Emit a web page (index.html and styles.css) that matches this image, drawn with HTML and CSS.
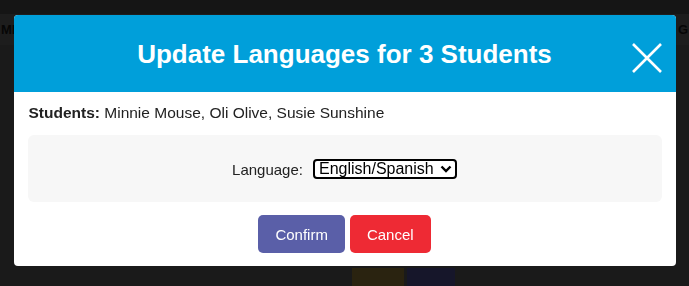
FILE: index.html
```html
<!DOCTYPE html>
<html lang="en">
<head>
    <meta charset="UTF-8">
    <meta name="viewport" content="width=device-width, initial-scale=1.0">
    <title>Update Languages</title>
    <link rel="stylesheet" href="styles.css">
</head>
<body>
    <div class="page">
        <div class="page-top"></div>
        <nav class="page-nav">
            <span>MI</span>
            <span>G</span>
        </nav>
        <div class="page-content">
            <div class="tile tile-orange"></div>
            <div class="tile tile-navy"></div>
        </div>
    </div>

    <div class="modal-overlay">
        <div class="modal">
            <header class="modal-header">
                <h1>Update Languages for 3 Students</h1>
                <button class="modal-close" aria-label="Close">
                    <svg width="30" height="30" viewBox="0 0 30 30">
                        <path d="M1 1 L29 29 M29 1 L1 29" stroke="#fff" stroke-width="2.6" fill="none"/>
                    </svg>
                </button>
            </header>

            <div class="modal-body">
                <p class="students"><strong>Students:</strong> Minnie Mouse, Oli Olive, Susie Sunshine</p>

                <div class="field-panel">
                    <label for="language">Language:</label>
                    <span class="select-wrap">
                        <select id="language">
                            <option>English/Spanish</option>
                            <option>English</option>
                            <option>Spanish</option>
                        </select>
                        <svg class="select-arrow" width="12" height="8" viewBox="0 0 12 8">
                            <path d="M1.5 1.5 L6 6 L10.5 1.5" stroke="#000" stroke-width="2.4" fill="none"/>
                        </svg>
                    </span>
                </div>

                <div class="actions">
                    <button class="btn btn-confirm">Confirm</button>
                    <button class="btn btn-cancel">Cancel</button>
                </div>
            </div>
        </div>
    </div>
</body>
</html>
```

FILE: styles.css
```css
* {
    margin: 0;
    padding: 0;
    box-sizing: border-box;
}

body {
    background: #1a1a1a;
    font-family: "Liberation Sans", Arial, sans-serif;
    width: 689px;
    height: 286px;
    overflow: hidden;
}

/* dimmed page behind the modal */
.page-top {
    height: 14px;
    background: #151515;
}

.page-nav {
    height: 31px;
    background: #1d1d1d;
    display: flex;
    justify-content: space-between;
    align-items: center;
    font-weight: bold;
    font-size: 13px;
    color: #060606;
    padding: 0 1px;
}

.page-content {
    display: flex;
    justify-content: center;
    gap: 3px;
    padding-top: 223px;
    padding-left: 118px;
}

.tile {
    width: 52px;
    height: 24px;
}

.tile-orange {
    background: #2a2310;
}

.tile-navy {
    width: 48px;
    background: #16162a;
}

/* modal */
.modal-overlay {
    position: fixed;
    inset: 0;
    display: flex;
    justify-content: center;
    align-items: flex-start;
    padding-top: 15px;
}

.modal {
    width: 662px;
    background: #fff;
    border-radius: 4px;
    overflow: hidden;
}

.modal-header {
    position: relative;
    height: 77px;
    background: #009fda;
    display: flex;
    align-items: center;
    justify-content: center;
}

.modal-header h1 {
    color: #fff;
    font-size: 26px;
    font-weight: bold;
    padding-top: 1px;
}

.modal-close {
    position: absolute;
    right: 14px;
    top: 28px;
    width: 30px;
    height: 30px;
    background: none;
    border: none;
    cursor: pointer;
}

.modal-close svg {
    display: block;
}

.modal-body {
    padding: 12px 14px 13px;
}

.students {
    font-size: 15.5px;
    line-height: 17px;
    color: #222;
    padding-left: 1px;
}

.field-panel {
    margin-top: 14px;
    height: 67px;
    background: #f7f7f7;
    border-radius: 6px;
    display: flex;
    justify-content: center;
    align-items: center;
    gap: 10px;
    font-size: 15px;
    color: #222;
    padding-top: 1px;
}

.select-wrap {
    position: relative;
    display: inline-flex;
}

.select-wrap select {
    appearance: none;
    font-family: "Liberation Sans", Arial, sans-serif;
    font-size: 16px;
    line-height: 16px;
    color: #000;
    background: #fff;
    border: 2px solid #000;
    border-radius: 4px;
    height: 20px;
    width: 144px;
    padding: 0 20px 0 4px;
}

.select-arrow {
    position: absolute;
    right: 5px;
    top: 6px;
    pointer-events: none;
}

.actions {
    margin-top: 13px;
    display: flex;
    justify-content: center;
    gap: 5px;
}

.btn {
    height: 38px;
    padding: 0 17px;
    border: none;
    border-radius: 5px;
    color: #fff;
    font-family: "Liberation Sans", Arial, sans-serif;
    font-size: 15px;
    cursor: pointer;
}

.btn-confirm {
    background: #5a5fa8;
}

.btn-cancel {
    background: #ee2a34;
}
```
